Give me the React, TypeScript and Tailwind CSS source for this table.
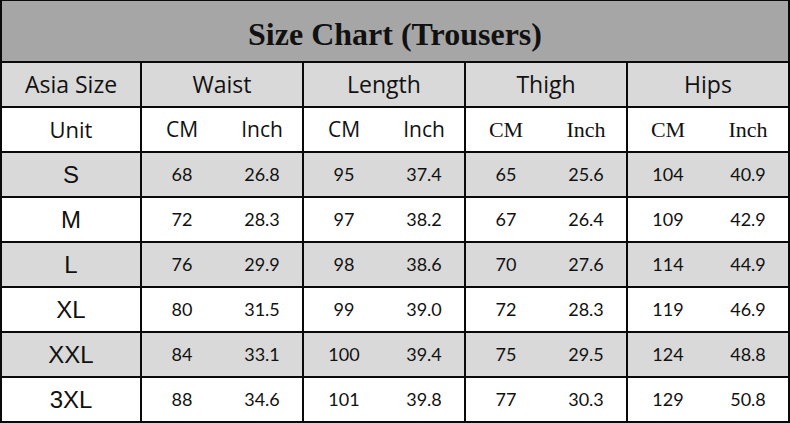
const groups = ['Waist', 'Length', 'Thigh', 'Hips']

const rows: [string, string[]][] = [
  ['S', ['68', '26.8', '95', '37.4', '65', '25.6', '104', '40.9']],
  ['M', ['72', '28.3', '97', '38.2', '67', '26.4', '109', '42.9']],
  ['L', ['76', '29.9', '98', '38.6', '70', '27.6', '114', '44.9']],
  ['XL', ['80', '31.5', '99', '39.0', '72', '28.3', '119', '46.9']],
  ['XXL', ['84', '33.1', '100', '39.4', '75', '29.5', '124', '48.8']],
  ['3XL', ['88', '34.6', '101', '39.8', '77', '30.3', '129', '50.8']],
]

const sans = "font-['Open_Sans',sans-serif]"
const serif = "font-['Liberation_Serif',serif]"

export default function App() {
  return (
    <div className="w-[790px] h-[423px] bg-white">
      <div className="grid grid-cols-[138px_160px_160px_160px_160px] grid-rows-[60px_repeat(8,43px)] gap-[2px] bg-[#0a0a0a] px-[2px] pt-[1px] pb-[2px] text-[#111]">
        {/* Title */}
        <div className="col-span-5 bg-[#a6a6a6] flex items-center justify-center pt-[5px]">
          <span className={`${serif} font-bold text-[32px]`}>Size Chart (Trousers)</span>
        </div>

        {/* Header row */}
        <div className={`bg-[#d9d9d9] flex items-center justify-center text-[23px] ${sans}`}>Asia Size</div>
        {groups.map((g) => (
          <div key={g} className={`bg-[#d9d9d9] flex items-center justify-center text-[23px] ${sans}`}>
            {g}
          </div>
        ))}

        {/* Unit row */}
        <div className={`bg-white flex items-center justify-center text-[22px] ${sans}`}>Unit</div>
        {groups.map((g, i) => (
          <div
            key={g}
            className={`bg-white grid grid-cols-2 items-center text-center ${
              i < 2 ? `${sans} text-[21px]` : `${serif} text-[22px]`
            }`}
          >
            <span>CM</span>
            <span>Inch</span>
          </div>
        ))}

        {/* Data rows */}
        {rows.map(([size, vals], r) => {
          const bg = r % 2 === 0 ? 'bg-[#d9d9d9]' : 'bg-white'
          return [
            <div
              key={size}
              className={`${bg} flex items-center justify-center font-['Liberation_Sans',sans-serif] text-[24px]`}
            >
              {size}
            </div>,
            ...groups.map((g, i) => (
              <div
                key={size + g}
                className={`${bg} grid grid-cols-2 items-center text-center font-['Lato',sans-serif] text-[18px]`}
              >
                <span>{vals[i * 2]}</span>
                <span>{vals[i * 2 + 1]}</span>
              </div>
            )),
          ]
        })}
      </div>
    </div>
  )
}
